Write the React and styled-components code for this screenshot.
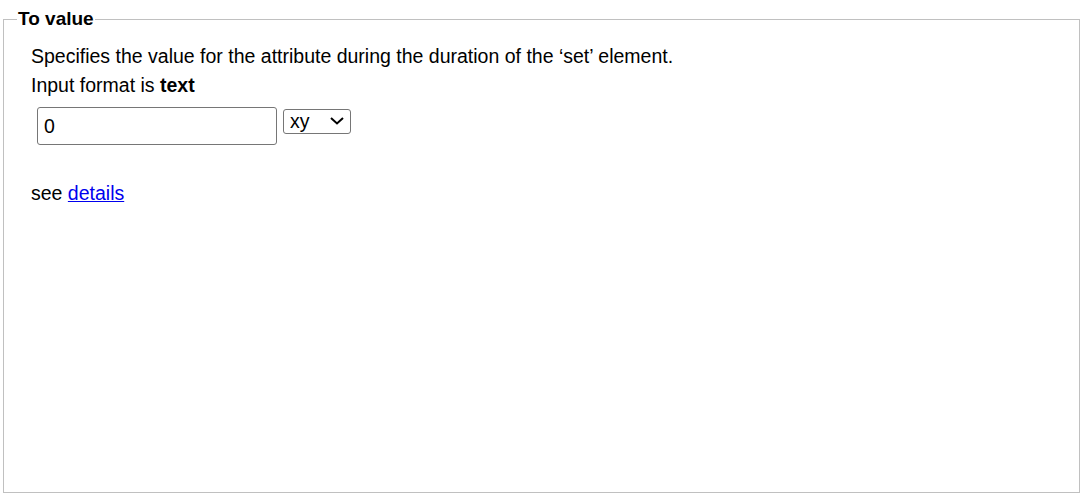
import React from 'react'
import styled, { createGlobalStyle } from 'styled-components'

const Global = createGlobalStyle`
  body {
    margin: 0;
    font-family: "Liberation Sans", Arial, sans-serif;
    background: #fff;
    color: #000;
  }
`

const Fieldset = styled.fieldset`
  margin: 8px 6px 0 3px;
  padding: 12px 26px 0 27px;
  height: 485px;
  border: 1px solid #c0c0c0;
  box-sizing: border-box;
`

const Legend = styled.legend`
  font-size: 19px;
  font-weight: bold;
  padding: 0 1px;
  margin-left: -14px;
`

const Line = styled.div`
  font-size: 19.5px;
  line-height: 29px;
`

const Controls = styled.div`
  display: flex;
  align-items: flex-start;
  gap: 6px;
  margin: 7px 0 0 6px;
`

const TextInput = styled.input`
  width: 240px;
  height: 38px;
  box-sizing: border-box;
  border: 1px solid #767676;
  border-radius: 3px;
  font-family: inherit;
  font-size: 19.5px;
  padding: 0 6px;
`

const SelectWrap = styled.div`
  position: relative;
  margin-top: 2px;
`

const Select = styled.select`
  appearance: none;
  width: 68px;
  height: 25px;
  box-sizing: border-box;
  border: 1px solid #767676;
  border-radius: 3px;
  font-family: inherit;
  font-size: 19.5px;
  line-height: 23px;
  padding: 0 0 0 6px;
  background: #fff;
  color: #000;
`

const Chevron = styled.svg`
  position: absolute;
  right: 7px;
  top: 8px;
  pointer-events: none;
`

const SeeLine = styled.div`
  font-size: 19.5px;
  margin-top: 37px;
`

const Link = styled.a`
  color: #0000ee;
`

export default function App() {
  return (
    <>
      <Global />
      <Fieldset>
        <Legend>To value</Legend>
        <Line>Specifies the value for the attribute during the duration of the ‘set’ element.</Line>
        <Line>Input format is <b>text</b></Line>
        <Controls>
          <TextInput defaultValue="0" />
          <SelectWrap>
            <Select defaultValue="xy">
              <option value="xy">xy</option>
            </Select>
            <Chevron width="14" height="8" viewBox="0 0 14 8">
              <path d="M1 1 L7 6.5 L13 1" fill="none" stroke="#000" strokeWidth="2" />
            </Chevron>
          </SelectWrap>
        </Controls>
        <SeeLine>see <Link href="#">details</Link></SeeLine>
      </Fieldset>
    </>
  )
}
